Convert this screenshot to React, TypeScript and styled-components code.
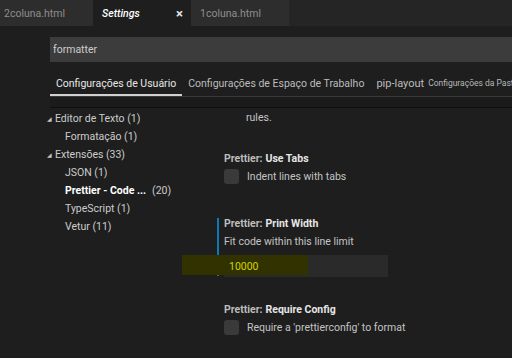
import React from "react";
import styled, { createGlobalStyle } from "styled-components";

const Global = createGlobalStyle`
  html, body { margin: 0; padding: 0; background: #1e1e1e; }
  body { font-family: Roboto, "Open Sans", sans-serif; color: #cccccc; overflow: hidden; }
  * { box-sizing: border-box; }
`;

const Page = styled.div`
  width: 512px;
  height: 358px;
  background: #1e1e1e;
  overflow: hidden;
  display: flex;
  flex-direction: column;
`;

const TabBar = styled.div`
  height: 26px;
  display: flex;
  background: #252526;
  flex-shrink: 0;
`;

const Tab = styled.div<{ $active?: boolean; $w: number }>`
  width: ${(p) => p.$w}px;
  height: 26px;
  display: flex;
  align-items: center;
  padding: 0 ${(p) => (p.$active ? "8px" : "4px")} 0 ${(p) => (p.$active ? "9px" : "4px")};
  background: ${(p) => (p.$active ? "#1e1e1e" : "#2d2d2d")};
  color: ${(p) => (p.$active ? "#ffffff" : "#8d8d8d")};
  font-size: 10.5px;
  font-style: ${(p) => (p.$active ? "italic" : "normal")};
  font-weight: ${(p) => (p.$active ? 500 : 400)};
  white-space: nowrap;
`;

const TabLabel = styled.span<{ $pad?: number }>`
  flex: 1;
  padding-left: ${(p) => p.$pad || 0}px;
`;

const Close = styled.span`
  font-style: normal;
  font-size: 13px;
  font-weight: 700;
  color: #e8e8e8;
`;

const Editor = styled.div`
  flex: 1;
  display: flex;
  flex-direction: column;
  padding-left: 50px;
`;

const SearchBox = styled.div`
  margin-top: 11px;
  height: 25px;
  background: #3c3c3c;
  color: #cccccc;
  font-size: 10.5px;
  display: flex;
  align-items: center;
  padding-left: 3px;
`;

const SettingsTabs = styled.div`
  height: 35px;
  display: flex;
  align-items: stretch;
  border-bottom: 1px solid #3a3a3a;
  white-space: nowrap;
  overflow: hidden;
`;

const STab = styled.div<{ $active?: boolean; $big?: boolean }>`
  display: flex;
  align-items: center;
  padding: 10px 6px 0;
  font-size: ${(p) => (p.$big ? "11px" : "10.5px")};
  color: ${(p) => (p.$active ? "#e7e7e7" : "#bcbcbc")};
  border-bottom: 2px solid ${(p) => (p.$active ? "#d0d0d0" : "transparent")};
  gap: 4px;
`;

const Small = styled.span`
  font-size: 8.5px;
  color: #b8b8b8;
`;

const ShadowBand = styled.div`
  height: 11px;
  background: #1b1b1b;
  border-bottom: 1px solid #0e0e0e;
`;

const Body = styled.div`
  flex: 1;
  display: grid;
  grid-template-columns: 174px 1fr;
`;

const Tree = styled.div`
  display: flex;
  flex-direction: column;
  padding-top: 1px;
`;

const TreeRow = styled.div<{ $level: number; $bold?: boolean }>`
  height: 18px;
  display: flex;
  align-items: center;
  padding-left: ${(p) => (p.$level === 0 ? 0 : 15)}px;
  font-size: 10.5px;
  color: ${(p) => (p.$bold ? "#ffffff" : "#cccccc")};
  font-weight: ${(p) => (p.$bold ? 700 : 400)};
  white-space: nowrap;
`;

const Twist = styled.span`
  width: 8px;
  margin-left: -3px;
  font-size: 6px;
  color: #c5c5c5;
`;

const Count = styled.span`
  font-weight: 400;
  color: #cccccc;
  margin-left: 6px;
`;

const Content = styled.div`
  display: flex;
  flex-direction: column;
`;

const Desc = styled.div<{ $indent?: boolean }>`
  font-size: 10.5px;
  color: #c4c4c4;
  height: 18px;
  display: flex;
  align-items: center;
  padding-left: ${(p) => (p.$indent ? 22 : 0)}px;
`;

const Setting = styled.div<{ $top: number }>`
  margin-top: ${(p) => p.$top}px;
  position: relative;
  display: flex;
  flex-direction: column;
`;

const FocusBar = styled.div`
  position: absolute;
  left: -7px;
  top: 4px;
  width: 2px;
  height: 58px;
  background: linear-gradient(to bottom, #0e7ab3 0, #0e7ab3 37px, #1f8a1f 37px);
`;

const Title = styled.div`
  height: 18px;
  display: flex;
  align-items: center;
  font-size: 10.5px;
  font-weight: 700;
  color: #e6e6e6;
`;

const Category = styled.span`
  color: #bdbdbd;
  margin-right: 3px;
`;

const CheckRow = styled.div`
  margin-top: 1px;
  display: flex;
  align-items: center;
  gap: 8px;
  height: 16px;
`;

const Check = styled.div`
  width: 15px;
  height: 15px;
  border-radius: 3px;
  background: #3a3a3a;
`;

const InputRow = styled.div`
  position: relative;
  margin-top: 5px;
  width: 164px;
  height: 22px;
  background: #2a2a2a;
  display: flex;
  align-items: center;
  padding-left: 5px;
`;

const Highlight = styled.div`
  position: absolute;
  left: -42px;
  top: 0;
  width: 126px;
  height: 20px;
  background: #323200;
`;

const InputText = styled.span`
  position: relative;
  font-size: 10.5px;
  color: #d4d400;
`;

export default function App() {
  return (
    <Page>
      <Global />
      <TabBar>
        <Tab $w={93}>
          <TabLabel>2coluna.html</TabLabel>
        </Tab>
        <Tab $w={98} $active>
          <TabLabel>Settings</TabLabel>
          <Close>×</Close>
        </Tab>
        <Tab $w={98}>
          <TabLabel $pad={5}>1coluna.html</TabLabel>
        </Tab>
      </TabBar>
      <Editor>
        <SearchBox>formatter</SearchBox>
        <SettingsTabs>
          <STab $active>Configurações de Usuário</STab>
          <STab>Configurações de Espaço de Trabalho</STab>
          <STab $big>
            pip-layout<Small>Configurações da Pasta</Small>
          </STab>
        </SettingsTabs>
        <ShadowBand />
        <Body>
          <Tree>
            <TreeRow $level={0}>
              <Twist>◢</Twist>Editor de Texto (1)
            </TreeRow>
            <TreeRow $level={1}>Formatação (1)</TreeRow>
            <TreeRow $level={0}>
              <Twist>◢</Twist>Extensões (33)
            </TreeRow>
            <TreeRow $level={1}>JSON (1)</TreeRow>
            <TreeRow $level={1} $bold>
              Prettier - Code ...<Count>(20)</Count>
            </TreeRow>
            <TreeRow $level={1}>TypeScript (1)</TreeRow>
            <TreeRow $level={1}>Vetur (11)</TreeRow>
          </Tree>
          <Content>
            <Desc $indent>rules.</Desc>
            <Setting $top={23}>
              <Title>
                <Category>Prettier:</Category>Use Tabs
              </Title>
              <CheckRow>
                <Check />
                <Desc>Indent lines with tabs</Desc>
              </CheckRow>
            </Setting>
            <Setting $top={30}>
              <FocusBar />
              <Title>
                <Category>Prettier:</Category>Print Width
              </Title>
              <Desc>Fit code within this line limit</Desc>
              <InputRow>
                <Highlight />
                <InputText>10000</InputText>
              </InputRow>
            </Setting>
            <Setting $top={23}>
              <Title>
                <Category>Prettier:</Category>Require Config
              </Title>
              <CheckRow>
                <Check />
                <Desc>Require a 'prettierconfig' to format</Desc>
              </CheckRow>
            </Setting>
          </Content>
        </Body>
      </Editor>
    </Page>
  );
}
